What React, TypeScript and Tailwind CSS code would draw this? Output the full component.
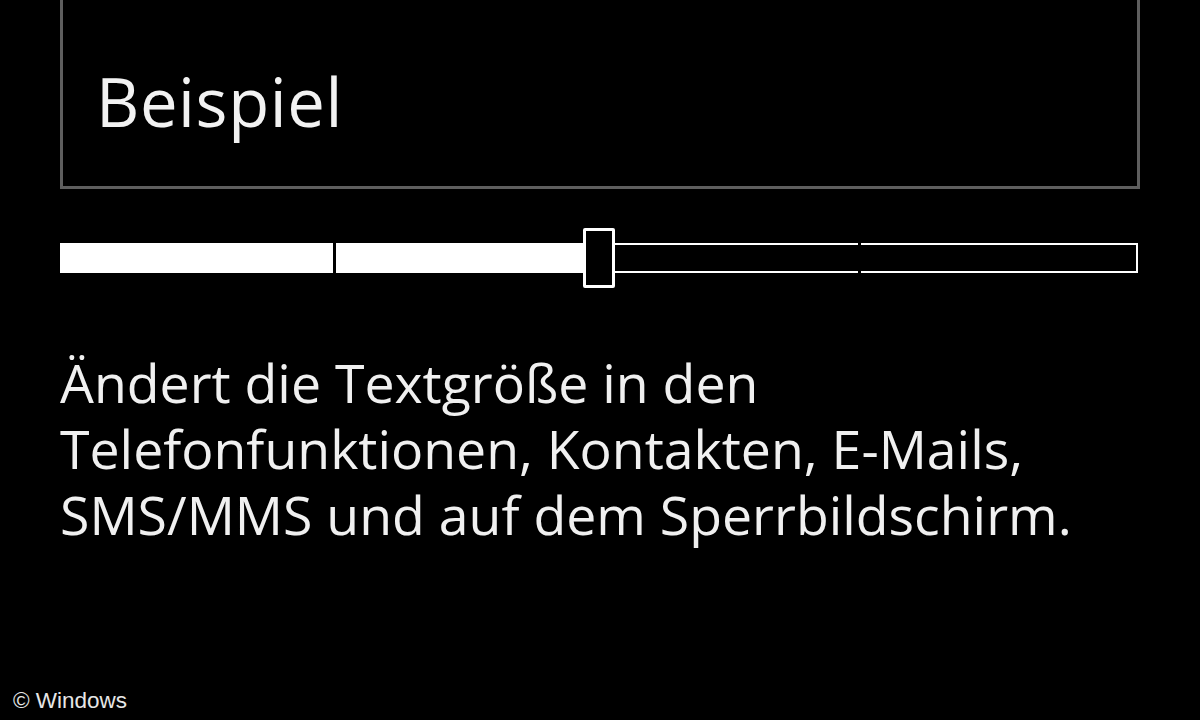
export default function App() {
  return (
    <div className="relative h-[720px] w-[1200px] overflow-hidden bg-black font-['Open_Sans','Noto_Sans',sans-serif] text-white">
      <div className="px-[60px]">
        {/* Preview box */}
        <div className="h-[189px] border-x-[3px] border-b-[3px] border-[#5e5e5e] pl-[33px] pt-[68px]">
          <div className="text-[67px] leading-none tracking-[0.6px] text-[#f2f2f2]">Beispiel</div>
        </div>

        {/* Text size slider */}
        <div className="mt-[39px] flex h-[60px] items-center">
          <div className="h-[30px] w-[273px] bg-white" />
          <div className="w-[3px]" />
          <div className="h-[30px] w-[247px] bg-white" />
          <div className="h-[60px] w-[32px] rounded-[2px] border-[3px] border-white bg-black" />
          <div className="h-[30px] w-[243px] border-y-2 border-white" />
          <div className="w-[3px]" />
          <div className="h-[30px] w-[277px] border-y-2 border-r-2 border-white" />
        </div>

        <p className="mt-[62px] text-[53.6px] leading-[66px] whitespace-nowrap text-[#f0f0f0]">
          <span className="block">Ändert die Textgröße in den</span>
          <span className="block">Telefonfunktionen, Kontakten, E-Mails,</span>
          <span className="block">SMS/MMS und auf dem Sperrbildschirm.</span>
        </p>
      </div>

      <div className="absolute bottom-[8px] left-[13px] font-['Liberation_Sans',Arial,sans-serif] text-[22.5px] leading-none text-[#e6e6e6]">
        © Windows
      </div>
    </div>
  );
}
